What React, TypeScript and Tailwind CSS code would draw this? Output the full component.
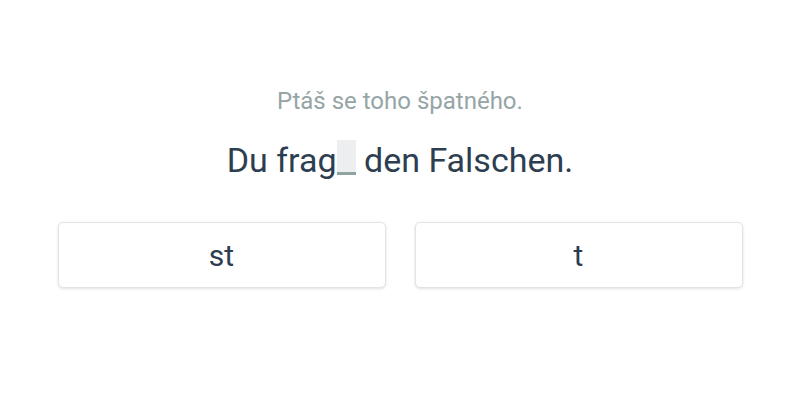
export default function App() {
  const options = ['st', 't'];

  return (
    <div className="w-[800px] h-[400px] bg-white flex flex-col items-center font-['Roboto',sans-serif]">
      <p className="mt-[87px] text-[24px] leading-[28px] text-[#95a5a6]">Ptáš se toho špatného.</p>
      <p className="mt-[25px] text-[34px] leading-[40px] text-[#2c3e50] flex items-center">
        <span>Du frag</span>
        <span className="inline-block w-[19px] h-[35px] bg-[#eceef0] border-b-[3px] border-[#8fa3a0] -mt-[5px]" />
        <span className="whitespace-pre"> den Falschen.</span>
      </p>
      <div className="mt-[42px] w-[685px] grid grid-cols-2 gap-[29px]">
        {options.map(o => (
          <button
            key={o}
            className="h-[66px] rounded-[5px] bg-white border border-[#e3e3e3] shadow-[0_1px_3px_rgba(0,0,0,0.12)] text-[30px] text-[#2c3e50]"
          >
            {o}
          </button>
        ))}
      </div>
    </div>
  );
}
